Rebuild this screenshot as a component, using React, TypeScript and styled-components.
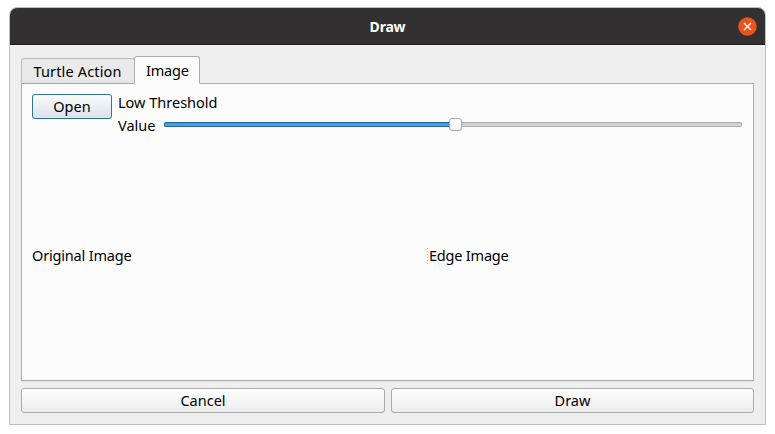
import React from 'react';
import styled, { createGlobalStyle } from 'styled-components';

const GlobalStyle = createGlobalStyle`
  * { box-sizing: border-box; }
  body {
    margin: 0;
    background: #fff;
    color: #000;
    font: 14.5px/20px "Noto Sans", "Open Sans", sans-serif;
    overflow: hidden;
  }
  button { font: inherit; color: inherit; }
`;

const Desktop = styled.main`
  width: 775px;
  height: 434px;
  padding: 7px 9px 9px 9px;
`;

const Window = styled.section`
  display: flex;
  flex-direction: column;
  height: 418px;
  background: #efefef;
  border: 1px solid #bebebe;
  border-radius: 8px 8px 0 0;
  overflow: hidden;
`;

const TitleBar = styled.header`
  display: grid;
  grid-template-columns: 1fr auto 1fr;
  align-items: center;
  flex: none;
  height: 37px;
  background: #323030;
  border-bottom: 1px solid #1e1c1c;
  color: #fff;
`;

const Title = styled.h1`
  grid-column: 2;
  margin: 0;
  padding-top: 1px;
  font-size: 14px;
  line-height: 20px;
  font-weight: 700;
  letter-spacing: -0.2px;
`;

const CloseButton = styled.button`
  justify-self: end;
  display: flex;
  width: 19px;
  height: 19px;
  margin-right: 8px;
  padding: 0;
  border: 0;
  background: none;
`;

const Body = styled.div`
  display: flex;
  flex-direction: column;
  flex: 1;
  padding: 11px;
`;

const TabBar = styled.div`
  display: flex;
  align-items: flex-end;
  height: 28px;
  margin-bottom: -1px;
`;

const Tab = styled.div<{ $active?: boolean }>`
  display: flex;
  align-items: center;
  justify-content: center;
  width: ${p => (p.$active ? 66 : 114)}px;
  height: ${p => (p.$active ? 28 : 26)}px;
  margin-left: ${p => (p.$active ? -1 : 0)}px;
  border: 1px solid ${p => (p.$active ? '#ababab' : '#b9b9b9')};
  border-bottom-color: ${p => (p.$active ? '#fcfcfc' : '#ababab')};
  border-radius: 3px 3px 0 0;
  background: ${p => (p.$active ? '#fcfcfc' : 'linear-gradient(#eaeaea 0 85%, #e2e2e2)')};
  z-index: ${p => (p.$active ? 1 : 0)};
`;

const Pane = styled.div`
  display: flex;
  flex-direction: column;
  height: 298px;
  padding: 10px 11px 10px 10px;
  background: #fcfcfc;
  border: 1px solid #ababab;
  box-shadow: 0 1px 0 #e2e2e2;
`;

const Controls = styled.div`
  display: flex;
  gap: 6px;
  height: 43px;
`;

const Button = styled.button<{ $focused?: boolean }>`
  flex: ${p => (p.$focused ? '0 0 80px' : '1 1 0')};
  height: 25px;
  padding: 0;
  border: 1px solid ${p => (p.$focused ? '#307298' : '#ababab')};
  border-radius: 3px;
  background: ${p => (p.$focused ? 'linear-gradient(#fafbfc, #dae3ea)' : 'linear-gradient(#fefefe, #ececec)')};
  line-height: 23px;
`;

const Threshold = styled.div`
  display: flex;
  flex-direction: column;
  flex: 1;
  gap: 3px;
  margin-top: -2px;
`;

const ValueRow = styled.div`
  display: flex;
  align-items: center;
  gap: 8px;
  height: 20px;
`;

const Label = styled.span<{ $width: number; $spacing?: number }>`
  flex: none;
  width: ${p => p.$width}px;
  letter-spacing: ${p => p.$spacing ?? 0}px;
  white-space: nowrap;
`;

const Slider = styled.div`
  display: flex;
  align-items: center;
  flex: 1;
  height: 13px;
  margin-top: -1px;
`;

const Groove = styled.div<{ $filled?: boolean }>`
  flex: ${p => (p.$filled ? '0 0 285px' : '1')};
  height: 5px;
  border: 1px solid ${p => (p.$filled ? '#286896' : '#ababab')};
  border-radius: ${p => (p.$filled ? '2px 0 0 2px' : '0 2px 2px 0')};
  border-${p => (p.$filled ? 'right' : 'left')}: 0;
  background: ${p => (p.$filled ? 'linear-gradient(#3298dc, #4aa9ea)' : 'linear-gradient(#cbcbcb, #dadada)')};
`;

const Handle = styled.div`
  flex: none;
  width: 13px;
  height: 13px;
  border: 1px solid #a6a6a6;
  border-radius: 3px;
  background: linear-gradient(#fff, #f6f6f6);
`;

const Images = styled.div`
  display: grid;
  grid-template-columns: 395px 1fr;
  align-items: center;
  flex: 1;
  padding-top: 2px;
`;

const EdgeCell = styled.div`
  display: flex;
  align-items: center;
  gap: 1px;
`;

const SplitterDots = styled.i`
  width: 1px;
  height: 16px;
  margin-top: 2px;
  background: repeating-linear-gradient(#bcbcbc 0 1px, transparent 1px 3px);
`;

const Actions = styled.footer`
  display: grid;
  grid-template-columns: 364px 363px;
  gap: 6px;
  margin-top: 7px;
`;

export default function App() {
  return (
    <>
      <GlobalStyle />
      <Desktop>
        <Window>
          <TitleBar>
            <Title>Draw</Title>
            <CloseButton aria-label="Close">
              <svg width="19" height="19" viewBox="0 0 19 19">
                <circle cx="9.5" cy="9.5" r="9.3" fill="#e95420" />
                <path d="M6 6l7 7M13 6l-7 7" stroke="#fff" strokeWidth="1.4" />
              </svg>
            </CloseButton>
          </TitleBar>
          <Body>
            <TabBar>
              <Tab><Label $width={89} $spacing={0.15}>Turtle Action</Label></Tab>
              <Tab $active><Label $width={42} $spacing={-0.2}>Image</Label></Tab>
            </TabBar>
            <Pane>
              <Controls>
                <Button $focused>Open</Button>
                <Threshold>
                  <Label $width={100}>Low Threshold</Label>
                  <ValueRow>
                    <Label $width={38}>Value</Label>
                    <Slider>
                      <Groove $filled />
                      <Handle />
                      <Groove />
                    </Slider>
                  </ValueRow>
                </Threshold>
              </Controls>
              <Images>
                <Label $width={100} $spacing={-0.18}>Original Image</Label>
                <EdgeCell>
                  <SplitterDots />
                  <Label $width={80} $spacing={-0.2}>Edge Image</Label>
                </EdgeCell>
              </Images>
            </Pane>
            <Actions>
              <Button>Cancel</Button>
              <Button>Draw</Button>
            </Actions>
          </Body>
        </Window>
      </Desktop>
    </>
  );
}
